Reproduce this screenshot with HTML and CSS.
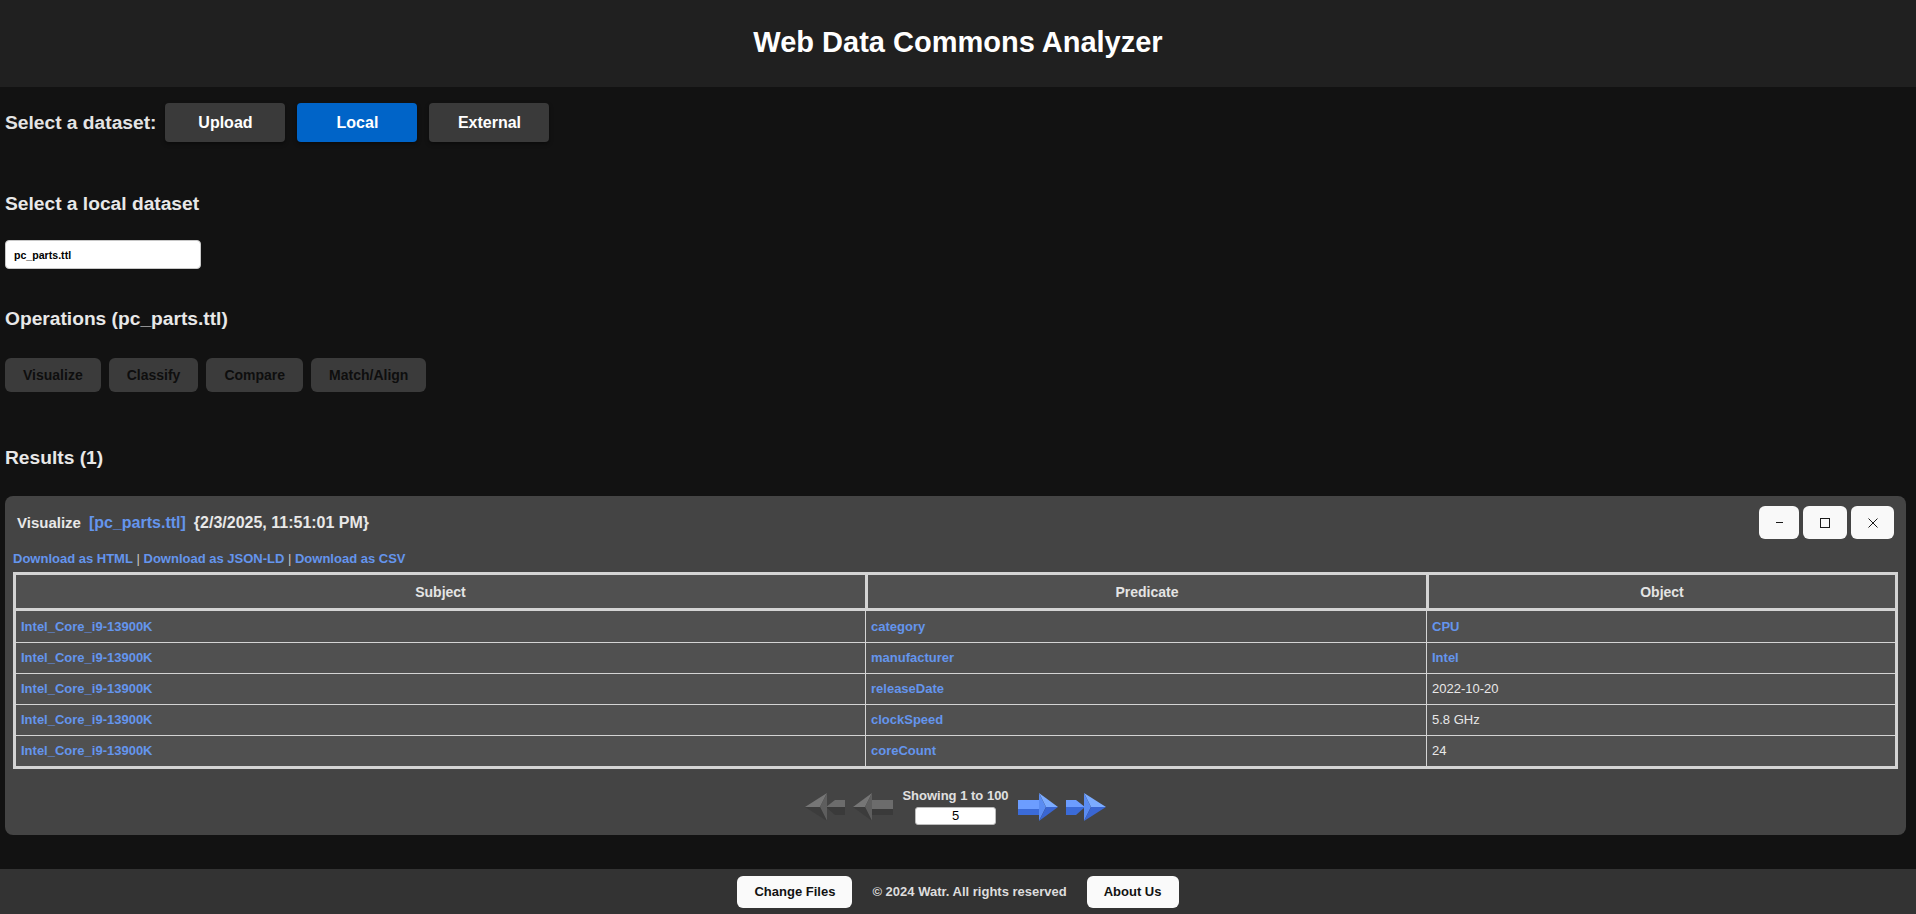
FILE: index.html
```html
<!DOCTYPE html>
<html lang="en">
<head>
<meta charset="utf-8">
<title>Web Data Commons Analyzer</title>
<link rel="stylesheet" href="styles.css">
</head>
<body>
<header class="app-header">
  <h1 class="app-title">Web Data Commons Analyzer</h1>
</header>

<main class="content">
  <div class="dataset-row">
    <span class="dataset-label">Select a dataset:</span>
    <div class="src-btns">
      <button class="src-btn">Upload</button>
      <button class="src-btn active">Local</button>
      <button class="src-btn">External</button>
    </div>
  </div>

  <h3 class="section-title title-local">Select a local dataset</h3>
  <div class="file-input">pc_parts.ttl</div>

  <h3 class="section-title title-ops">Operations (pc_parts.ttl)</h3>
  <div class="ops">
    <button class="op-btn">Visualize</button>
    <button class="op-btn">Classify</button>
    <button class="op-btn">Compare</button>
    <button class="op-btn">Match/Align</button>
  </div>

  <h3 class="section-title title-results">Results (1)</h3>

  <section class="result-card">
    <div class="card-head">
      <div class="card-title">
        <span class="op-name">Visualize</span>
        <a class="ds-link">[pc_parts.ttl]</a>
        <span class="stamp">{2/3/2025, 11:51:01 PM}</span>
      </div>
      <div class="win-btns">
        <button class="win-btn win-min" aria-label="Minimize"><svg width="7" height="1" viewBox="0 0 7 1"><rect x="0" y="0" width="7" height="1" fill="#1a1a1a"/></svg></button>
        <button class="win-btn win-max" aria-label="Maximize"><svg width="10" height="10" viewBox="0 0 10 10"><rect x="0.5" y="0.5" width="9" height="9" fill="none" stroke="#1a1a1a" stroke-width="1"/></svg></button>
        <button class="win-btn win-close" aria-label="Close"><svg width="10" height="10" viewBox="0 0 10 10"><path d="M0.5 0.5 L9.5 9.5 M9.5 0.5 L0.5 9.5" stroke="#1a1a1a" stroke-width="1" fill="none"/></svg></button>
      </div>
    </div>

    <div class="downloads">
      <a class="dl-link">Download as HTML</a><span class="sep"> | </span><a class="dl-link">Download as JSON-LD</a><span class="sep"> | </span><a class="dl-link">Download as CSV</a>
    </div>

    <table class="triples">
      <colgroup>
        <col class="col-s">
        <col class="col-p">
        <col class="col-o">
      </colgroup>
      <thead>
        <tr><th>Subject</th><th>Predicate</th><th>Object</th></tr>
      </thead>
      <tbody>
        <tr><td><a class="cell-link">Intel_Core_i9-13900K</a></td><td><a class="cell-link">category</a></td><td><a class="cell-link">CPU</a></td></tr>
        <tr><td><a class="cell-link">Intel_Core_i9-13900K</a></td><td><a class="cell-link">manufacturer</a></td><td><a class="cell-link">Intel</a></td></tr>
        <tr><td><a class="cell-link">Intel_Core_i9-13900K</a></td><td><a class="cell-link">releaseDate</a></td><td>2022-10-20</td></tr>
        <tr><td><a class="cell-link">Intel_Core_i9-13900K</a></td><td><a class="cell-link">clockSpeed</a></td><td>5.8 GHz</td></tr>
        <tr><td><a class="cell-link">Intel_Core_i9-13900K</a></td><td><a class="cell-link">coreCount</a></td><td>24</td></tr>
      </tbody>
    </table>

    <div class="pager">
      <svg class="pg-arrow flip" width="40" height="28" viewBox="0 0 40 28" aria-label="First page">
        <polygon points="0,7 10,7 19,14 0,14" fill="#6c6c6c"/>
        <polygon points="0,14 19,14 10,22 0,22" fill="#3a3a3a"/>
        <polygon points="18,0 40,14 25,14" fill="#767676"/>
        <polygon points="18,0 25,14 18,28" fill="#5e5e5e"/>
        <polygon points="18,28 40,14 25,14" fill="#3c3c3c"/>
      </svg>
      <svg class="pg-arrow flip" width="40" height="28" viewBox="0 0 40 28" aria-label="Previous page">
        <polygon points="0,7 22,7 22,16 0,16" fill="#6c6c6c"/>
        <polygon points="0,16 22,16 22,22 0,22" fill="#3a3a3a"/>
        <polygon points="21,0 40,14 28,14" fill="#767676"/>
        <polygon points="21,0 28,14 21,28" fill="#5e5e5e"/>
        <polygon points="21,28 40,14 28,14" fill="#3c3c3c"/>
      </svg>
      <div class="pg-info">
        <span class="pg-text">Showing 1 to 100</span>
        <div class="pg-input">5</div>
      </div>
      <svg class="pg-arrow" width="40" height="28" viewBox="0 0 40 28" aria-label="Next page">
        <polygon points="0,7 22,7 22,16 0,16" fill="#6c9dff"/>
        <polygon points="0,16 22,16 22,22 0,22" fill="#3b6bd8"/>
        <polygon points="21,0 40,14 28,14" fill="#7cacff"/>
        <polygon points="21,0 28,14 21,28" fill="#5a8cf2"/>
        <polygon points="21,28 40,14 28,14" fill="#3a66d2"/>
      </svg>
      <svg class="pg-arrow" width="40" height="28" viewBox="0 0 40 28" aria-label="Last page">
        <polygon points="0,7 10,7 19,14 0,14" fill="#6c9dff"/>
        <polygon points="0,14 19,14 10,22 0,22" fill="#3b6bd8"/>
        <polygon points="18,0 40,14 25,14" fill="#7cacff"/>
        <polygon points="18,0 25,14 18,28" fill="#5a8cf2"/>
        <polygon points="18,28 40,14 25,14" fill="#3a66d2"/>
      </svg>
    </div>
  </section>
</main>

<footer class="app-footer">
  <button class="foot-btn">Change Files</button>
  <span class="copyright">© 2024 Watr. All rights reserved</span>
  <button class="foot-btn">About Us</button>
</footer>
</body>
</html>
```

FILE: styles.css
```css
* {
  box-sizing: border-box;
}

html,
body {
  margin: 0;
  padding: 0;
}

body {
  background: #121212;
  color: #e6e6e6;
  font-family: "Liberation Sans", Arial, sans-serif;
  height: 914px;
  overflow: hidden;
}

button {
  font-family: "Liberation Sans", Arial, sans-serif;
  cursor: pointer;
}

/* Header */
.app-header {
  height: 87px;
  background: #202020;
  display: flex;
  align-items: center;
  justify-content: center;
  padding-bottom: 2px;
}

.app-title {
  margin: 0;
  font-size: 29px;
  font-weight: bold;
  color: #ffffff;
}

/* Main content */
.content {
  padding: 16px 10px 0 5px;
}

.dataset-row {
  display: flex;
  align-items: center;
  gap: 9px;
}

.dataset-label {
  font-size: 19.2px;
  font-weight: bold;
  color: #e4e4e4;
}

.src-btns {
  display: flex;
  gap: 12px;
}

.src-btn {
  width: 120px;
  height: 39px;
  border: none;
  border-radius: 4px;
  background: #3a3a3a;
  color: #ffffff;
  font-size: 16px;
  font-weight: bold;
  box-shadow: 0 2px 4px rgba(0, 0, 0, 0.4);
}

.src-btn.active {
  background: #0064c8;
}

.section-title {
  margin: 0;
  font-size: 19.2px;
  line-height: 22px;
  font-weight: bold;
  color: #e8e8e8;
}

.title-local {
  margin-top: 51px;
}

.file-input {
  margin-top: 25px;
  width: 196px;
  height: 29px;
  background: #ffffff;
  border: 1px solid #c8c8c8;
  border-radius: 4px;
  color: #000000;
  font-size: 10.6px;
  font-weight: bold;
  padding-left: 8px;
  display: flex;
  align-items: center;
}

.title-ops {
  margin-top: 39px;
}

.ops {
  margin-top: 28px;
  display: flex;
  gap: 8px;
}

.op-btn {
  height: 34px;
  padding: 0 18px;
  border: none;
  border-radius: 6px;
  background: #3b3b3b;
  color: #0e0e0e;
  font-size: 14px;
  font-weight: bold;
}

.title-results {
  margin-top: 55px;
}

/* Result card */
.result-card {
  margin-top: 27px;
  background: #444444;
  border-radius: 8px;
  padding: 10px 8px;
}

.card-head {
  display: flex;
  align-items: center;
  justify-content: space-between;
  padding: 0 4px;
  height: 33px;
}

.card-title {
  display: flex;
  align-items: baseline;
  gap: 8px;
  font-weight: bold;
  color: #e8e8e8;
}

.op-name {
  font-size: 15px;
}

.ds-link {
  font-size: 16px;
  color: #6495ed;
}

.stamp {
  font-size: 16px;
}

.win-btns {
  display: flex;
  gap: 4px;
}

.win-btn {
  height: 33px;
  border: none;
  border-radius: 6px;
  background: #f9f9f9;
  display: flex;
  align-items: center;
  justify-content: center;
  padding: 0;
}

.win-min {
  width: 40px;
}

.win-max {
  width: 44px;
}

.win-close {
  width: 43px;
}

.downloads {
  margin-top: 12px;
  font-size: 13px;
  line-height: 15px;
}

.dl-link {
  color: #6495ed;
  font-weight: bold;
}

.sep {
  color: #c8c8c8;
}

/* Table */
.triples {
  margin-top: 6px;
  width: 100%;
  table-layout: fixed;
  border-collapse: separate;
  border-spacing: 0;
  border: 3px solid #d4d4d4;
  background: #505050;
  font-size: 13px;
}

.col-s {
  width: 849px;
}

.col-p {
  width: 561px;
}

.triples th {
  height: 36px;
  padding: 0 5px;
  font-size: 14px;
  font-weight: bold;
  color: #e4e4e4;
  text-align: center;
  border-bottom: 3px solid #d4d4d4;
}

.triples th + th {
  border-left: 3px solid #d4d4d4;
}

.triples td {
  height: 31px;
  padding: 0 5px;
  line-height: 14px;
  color: #e8e8e8;
  text-align: left;
}

.triples tr + tr td {
  border-top: 1px solid #d4d4d4;
}

.triples td + td {
  border-left: 1px solid #d4d4d4;
}

.cell-link {
  color: #6495ed;
  font-weight: bold;
}

/* Pager */
.pager {
  margin-top: 19px;
  display: flex;
  align-items: center;
  justify-content: center;
  gap: 8px;
}

.pg-arrow {
  display: block;
}

.flip {
  transform: scaleX(-1);
}

.pg-info {
  display: flex;
  flex-direction: column;
  align-items: center;
  gap: 4px;
  margin: 0 1px;
}

.pg-text {
  font-size: 13px;
  line-height: 15px;
  font-weight: bold;
  color: #e0e0e0;
}

.pg-input {
  width: 81px;
  height: 18px;
  background: #ffffff;
  border: 1px solid #bdbdbd;
  border-radius: 3px;
  color: #000000;
  font-size: 13px;
  line-height: 16px;
  text-align: center;
}

/* Footer */
.app-footer {
  margin-top: 34px;
  height: 45px;
  background: #333333;
  display: flex;
  align-items: center;
  justify-content: center;
  gap: 20px;
}

.foot-btn {
  height: 32px;
  padding: 0 17px;
  border: none;
  border-radius: 6px;
  background: #fafafa;
  color: #111111;
  font-size: 13px;
  font-weight: bold;
}

.copyright {
  font-size: 13px;
  font-weight: bold;
  color: #dddddd;
}
```
